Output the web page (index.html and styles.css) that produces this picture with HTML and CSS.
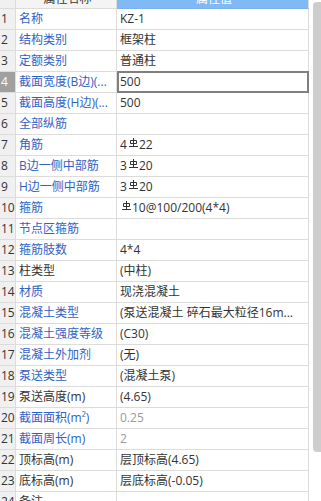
FILE: index.html
```html
<!DOCTYPE html>
<html lang="zh">
<head>
<meta charset="utf-8">
<title>属性列表</title>
<link rel="stylesheet" href="styles.css">
</head>
<body>
<div class="view">
  <div class="grid">
    <div class="row head">
      <div class="num"></div>
      <div class="name"><span>属性名称</span></div>
      <div class="val"><span>属性值</span></div>
    </div>
    <div class="row"><div class="num">1</div><div class="name link">名称</div><div class="val">KZ-1</div></div>
    <div class="row"><div class="num">2</div><div class="name link">结构类别</div><div class="val">框架柱</div></div>
    <div class="row"><div class="num">3</div><div class="name link">定额类别</div><div class="val">普通柱</div></div>
    <div class="row sel"><div class="num">4</div><div class="name link">截面宽度(B边)(...</div><div class="val">500</div></div>
    <div class="row"><div class="num">5</div><div class="name link">截面高度(H边)(...</div><div class="val">500</div></div>
    <div class="row"><div class="num">6</div><div class="name link">全部纵筋</div><div class="val"></div></div>
    <div class="row"><div class="num">7</div><div class="name link">角筋</div><div class="val">4<svg class="bar" viewBox="0 0 9 9"><path d="M4.5 0V8.5M1.5 2.5H7.5V5.5H1.5ZM0 8.5H9"/></svg>22</div></div>
    <div class="row"><div class="num">8</div><div class="name link">B边一侧中部筋</div><div class="val">3<svg class="bar" viewBox="0 0 9 9"><path d="M4.5 0V8.5M1.5 2.5H7.5V5.5H1.5ZM0 8.5H9"/></svg>20</div></div>
    <div class="row"><div class="num">9</div><div class="name link">H边一侧中部筋</div><div class="val">3<svg class="bar" viewBox="0 0 9 9"><path d="M4.5 0V8.5M1.5 2.5H7.5V5.5H1.5ZM0 8.5H9"/></svg>20</div></div>
    <div class="row"><div class="num">10</div><div class="name link">箍筋</div><div class="val"><svg class="bar lead" viewBox="0 0 9 9"><path d="M4.5 0V8.5M1.5 2.5H7.5V5.5H1.5ZM0 8.5H9"/></svg>10@100/200(4*4)</div></div>
    <div class="row"><div class="num">11</div><div class="name link">节点区箍筋</div><div class="val"></div></div>
    <div class="row"><div class="num">12</div><div class="name link">箍筋肢数</div><div class="val">4*4</div></div>
    <div class="row"><div class="num">13</div><div class="name">柱类型</div><div class="val">(中柱)</div></div>
    <div class="row"><div class="num">14</div><div class="name link">材质</div><div class="val">现浇混凝土</div></div>
    <div class="row"><div class="num">15</div><div class="name link">混凝土类型</div><div class="val">(泵送混凝土 碎石最大粒径16m...</div></div>
    <div class="row"><div class="num">16</div><div class="name link">混凝土强度等级</div><div class="val">(C30)</div></div>
    <div class="row"><div class="num">17</div><div class="name link">混凝土外加剂</div><div class="val">(无)</div></div>
    <div class="row"><div class="num">18</div><div class="name link">泵送类型</div><div class="val">(混凝土泵)</div></div>
    <div class="row"><div class="num">19</div><div class="name">泵送高度(m)</div><div class="val">(4.65)</div></div>
    <div class="row"><div class="num">20</div><div class="name link">截面面积(m²)</div><div class="val dim">0.25</div></div>
    <div class="row"><div class="num">21</div><div class="name link">截面周长(m)</div><div class="val dim">2</div></div>
    <div class="row"><div class="num">22</div><div class="name">顶标高(m)</div><div class="val">层顶标高(4.65)</div></div>
    <div class="row"><div class="num">23</div><div class="name">底标高(m)</div><div class="val">层底标高(-0.05)</div></div>
    <div class="row"><div class="num">24</div><div class="name">备注</div><div class="val"></div></div>
  </div>
  <div class="scroll"><div class="thumb"></div></div>
</div>
</body>
</html>
```

FILE: styles.css
```css
html, body {
  margin: 0;
  padding: 0;
  background: #fff;
  overflow: hidden;
}
body {
  font-family: "Open Sans", "Noto Sans CJK SC", sans-serif;
  font-size: 12px;
  color: #333;
}
.view {
  display: flex;
  width: 321px;
  height: 501px;
  overflow: hidden;
}
.grid {
  width: 309px;
  flex: none;
}
.row {
  display: flex;
  height: 21px;
}
.row > div {
  box-sizing: border-box;
  height: 21px;
  line-height: 20px;
  border-bottom: 1px solid #dcdcdc;
  border-right: 1px solid #dcdcdc;
  white-space: nowrap;
  overflow: hidden;
}
.num {
  width: 16px;
  flex: none;
  padding-left: 1px;
  background: #f0f0f0;
  color: #333;
}
.name {
  width: 101px;
  flex: none;
  padding-left: 3px;
}
.val {
  width: 192px;
  flex: none;
  padding-left: 3px;
}
.link {
  color: #2f62c4;
}
.dim {
  color: #9a9a9a;
}
.head {
  height: 9px;
}
.head > div {
  height: 9px;
}
.head span {
  display: block;
  margin-top: -11px;
  line-height: 20px;
  text-align: center;
}
.head .name {
  background: #f4f4f4;
  color: #333;
}
.head .val {
  background: #80b9f4;
  border-bottom-color: #7ab2ec;
  color: #fff;
}
.sel .num {
  background: #a0a0a0;
  color: #fff;
}
.sel .val {
  position: relative;
  overflow: visible;
}
.sel .val::after {
  content: "";
  position: absolute;
  top: -1px;
  left: 0;
  right: -1px;
  bottom: -1px;
  border: 2px solid #7f7f7f;
}
.bar {
  width: 9px;
  height: 9px;
  margin: 0 1px 0 2px;
  vertical-align: 2px;
  fill: none;
  stroke: #333;
  stroke-width: 1;
}
.bar.lead {
  margin-left: 2px;
}
.scroll {
  flex: 1;
}
.thumb {
  margin: 2px 0 0 4px;
  width: 8px;
  height: 450px;
  background: #cdcdcd;
  border-radius: 4px 0 0 4px;
}
```
